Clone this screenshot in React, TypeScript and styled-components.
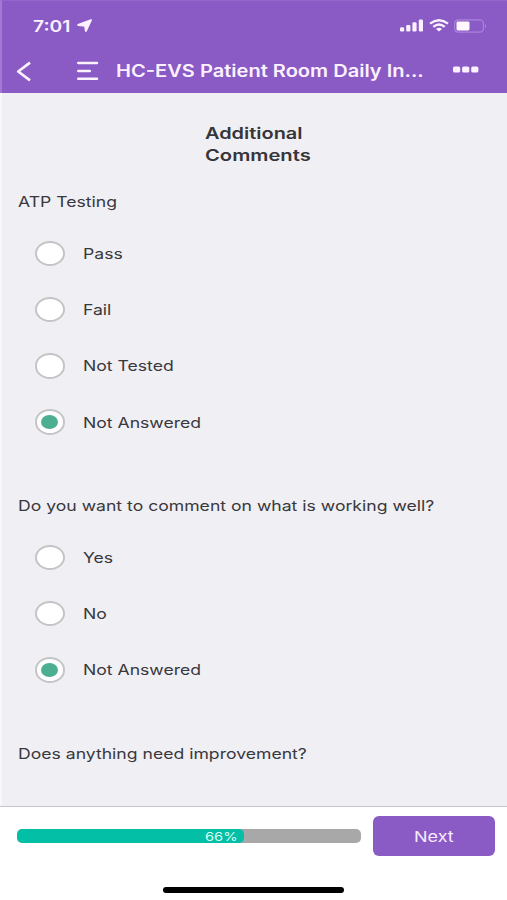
import React from "react";
import styled, { createGlobalStyle } from "styled-components";

const GlobalStyle = createGlobalStyle`
  * { box-sizing: border-box; }
  html, body { margin: 0; padding: 0; background: #fff; }
  body { font-family: Inter, "Liberation Sans", sans-serif; color: #39383d; }
`;

const Screen = styled.div`
  width: 507px;
  height: 900px;
  display: flex;
  flex-direction: column;
  overflow: hidden;
`;

const Header = styled.header`
  height: 93px;
  flex: none;
  background: #8a5ac5;
  border-left: 2px solid #a27ad3;
  border-top: 1px solid #9467cb;
  color: #fbf1ff;
`;

const StatusBar = styled.div`
  height: 49px;
  padding: 0 20px 0 31px;
  display: flex;
  align-items: center;
  justify-content: space-between;
`;

const StatusGroup = styled.div<{ $gap: number }>`
  display: flex;
  align-items: center;
  gap: ${(p) => p.$gap}px;
`;

const Wide = styled.span<{ $size: number; $stretch: number; $weight?: number; $width?: number }>`
  display: inline-block;
  width: ${(p) => (p.$width ? `${p.$width}px` : "auto")};
  font-size: ${(p) => p.$size}px;
  font-weight: ${(p) => p.$weight ?? 400};
  transform: scaleX(${(p) => p.$stretch});
  transform-origin: left center;
  white-space: nowrap;
`;

const NavBar = styled.nav`
  height: 42px;
  padding: 0 28px 0 13px;
  display: flex;
  align-items: center;
`;

const NavTitle = styled.div`
  flex: 1;
  margin-left: 17px;
`;

const Content = styled.main`
  flex: none;
  height: 713px;
  background: #f0eff4;
  border-left: 2px solid #f8f7fb;
  overflow: hidden;
`;

const PageTitle = styled.h1`
  margin: 0;
  height: 84.6px;
  padding: 29px 0 0 203px;
  display: flex;
  flex-direction: column;
  line-height: 22px;
  color: #36353a;
`;

const Section = styled.section`
  margin-bottom: 31.4px;
`;

const Question = styled.div`
  height: 47.8px;
  padding-left: 16px;
  display: flex;
  align-items: center;
`;

const Option = styled.label`
  height: 56.2px;
  padding-left: 32.5px;
  display: flex;
  align-items: center;
  gap: 18px;
`;

const Radio = styled.span`
  width: 30.5px;
  height: 25.5px;
  flex: none;
  border: 2px solid #c4c3c6;
  border-radius: 50%;
  background: #fff;
  display: flex;
  align-items: center;
  justify-content: center;
`;

const RadioDot = styled.span`
  width: 17px;
  height: 14px;
  border-radius: 50%;
  background: #4caf92;
`;

const Footer = styled.footer`
  height: 94px;
  flex: none;
  border-top: 1.5px solid #c6c5c9;
  background: #fff;
  display: flex;
  flex-direction: column;
  align-items: center;
`;

const Actions = styled.div`
  width: 100%;
  height: 58px;
  padding: 0 12px 0 17px;
  display: flex;
  align-items: center;
  justify-content: space-between;
`;

const Track = styled.div`
  width: 343.5px;
  height: 14.5px;
  border-radius: 5px;
  background: #a8a8a8;
  overflow: hidden;
`;

const Fill = styled.div`
  height: 100%;
  border-radius: 5px;
  background: #02bfa5;
  color: #d9fff4;
  display: flex;
  align-items: center;
  justify-content: flex-end;
  padding-right: 11.5px;
`;

const NextButton = styled.button`
  width: 122.5px;
  height: 40px;
  padding: 0 0 0 41.5px;
  border: 0;
  border-radius: 6px;
  background: #8a5ac5;
  color: #f7ebff;
  font-family: inherit;
  text-align: left;
`;

const HomeIndicator = styled.div`
  width: 181px;
  height: 5.5px;
  margin-top: 22px;
  border-radius: 3px;
  background: #000;
`;

const LocationIcon = () => (
  <svg width="16" height="13" viewBox="0 0 16 13">
    <path
      d="M14 1.1 L1.2 6 L8.1 6.7 L8.8 12Z"
      fill="currentColor"
      stroke="currentColor"
      strokeWidth="1.9"
      strokeLinejoin="round"
    />
  </svg>
);

const SignalIcon = () => (
  <svg width="24" height="13" viewBox="0 0 24 13" fill="currentColor">
    <rect x="0" y="8.3" width="4.2" height="4.2" rx="1.3" />
    <rect x="6.2" y="6" width="4.2" height="6.5" rx="1.3" />
    <rect x="12.4" y="3.3" width="4.2" height="9.2" rx="1.3" />
    <rect x="18.8" y="0.5" width="4.2" height="12" rx="1.3" />
  </svg>
);

const WifiIcon = () => (
  <svg width="20" height="13" viewBox="0 0 20 13" fill="none" stroke="currentColor">
    <path d="M1 4.6 Q10 -2.2 19 4.6" strokeWidth="2.3" />
    <path d="M4.3 7.8 Q10 3.2 15.7 7.8" strokeWidth="2.3" />
    <path d="M7 10 Q10 7.6 13 10 L10 12.6Z" fill="currentColor" stroke="none" />
  </svg>
);

const BatteryIcon = () => (
  <svg width="33" height="14" viewBox="0 0 33 14">
    <rect x=".6" y=".9" width="28.8" height="12.2" rx="3.6" fill="none" stroke="#ac83da" strokeWidth="1.2" />
    <path d="M31 5 Q33 7 31 9Z" fill="#b48ede" />
    <rect x="2.5" y="2.6" width="13" height="8.8" rx="1.4" fill="#fff8ff" />
  </svg>
);

const BackIcon = () => (
  <svg width="17" height="21" viewBox="0 0 17 21" fill="none" stroke="currentColor" strokeWidth="2.7">
    <path d="M15 1.7 L3.2 10.5 L15 19.3" strokeLinejoin="round" />
  </svg>
);

const MenuIcon = styled.svg`
  margin-left: 45px;
`;

const Menu = () => (
  <MenuIcon width="22" height="20" viewBox="0 0 22 20" stroke="currentColor" strokeWidth="2.5" strokeLinecap="round">
    <path d="M1.2 1.9H20M1.2 9.9H12.8M1.2 17.7H20" />
  </MenuIcon>
);

const MoreSvg = styled.svg`
  margin-bottom: 3px;
`;

const MoreIcon = () => (
  <MoreSvg width="26" height="7" viewBox="0 0 26 7" fill="currentColor">
    <rect x="0" y=".5" width="7.2" height="6" rx="1.6" />
    <rect x="9.1" y=".5" width="7.2" height="6" rx="1.6" />
    <rect x="18.2" y=".5" width="7.2" height="6" rx="1.6" />
  </MoreSvg>
);

const sections = [
  { question: "ATP Testing", options: ["Pass", "Fail", "Not Tested", "Not Answered"], selected: 3 },
  { question: "Do you want to comment on what is working well?", options: ["Yes", "No", "Not Answered"], selected: 2 },
  { question: "Does anything need improvement?", options: [], selected: -1 },
];

const progress = 66;

export default function App() {
  return (
    <Screen>
      <GlobalStyle />
      <Header>
        <StatusBar>
          <StatusGroup $gap={4}>
            <Wide $size={16} $stretch={1.2} $weight={600} $width={40}>7:01</Wide>
            <LocationIcon />
          </StatusGroup>
          <StatusGroup $gap={5}>
            <SignalIcon />
            <WifiIcon />
            <BatteryIcon />
          </StatusGroup>
        </StatusBar>
        <NavBar>
          <BackIcon />
          <Menu />
          <NavTitle>
            <Wide $size={17} $stretch={1.18} $weight={600}>HC-EVS Patient Room Daily In...</Wide>
          </NavTitle>
          <MoreIcon />
        </NavBar>
      </Header>
      <Content>
        <PageTitle>
          <Wide $size={16} $stretch={1.245} $weight={600}>Additional</Wide>
          <Wide $size={16} $stretch={1.26} $weight={600}>Comments</Wide>
        </PageTitle>
        {sections.map((s) => (
          <Section key={s.question}>
            <Question>
              <Wide $size={14.5} $stretch={1.214}>{s.question}</Wide>
            </Question>
            {s.options.map((o, i) => (
              <Option key={o}>
                <Radio>{i === s.selected && <RadioDot />}</Radio>
                <Wide $size={14.5} $stretch={1.214}>{o}</Wide>
              </Option>
            ))}
          </Section>
        ))}
      </Content>
      <Footer>
        <Actions>
          <Track>
            <Fill style={{ width: `${progress}%` }}>
              <Wide $size={12} $stretch={1.22} $width={27}>{progress}%</Wide>
            </Fill>
          </Track>
          <NextButton>
            <Wide $size={15} $stretch={1.2}>Next</Wide>
          </NextButton>
        </Actions>
        <HomeIndicator />
      </Footer>
    </Screen>
  );
}
